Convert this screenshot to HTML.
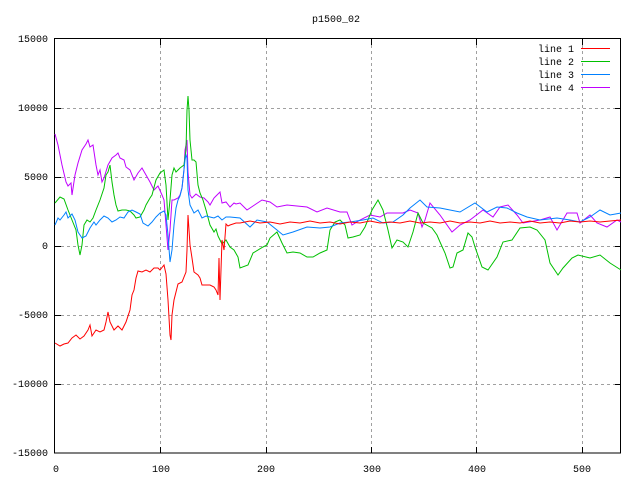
<!DOCTYPE html>
<html><head><meta charset="utf-8"><style>
html,body{margin:0;padding:0;background:#fff;width:640px;height:480px;overflow:hidden}
svg{display:block}
text{font-family:"Liberation Mono","DejaVu Sans Mono",monospace;font-size:10px;fill:#000}
</style></head><body>
<svg width="640" height="480" viewBox="0 0 640 480">
<g stroke="#a0a0a0" stroke-dasharray="3,3" stroke-width="1" fill="none" shape-rendering="crispEdges">
<path d="M55 108.5H621M55 177.5H621M55 246.5H621M55 315.5H621M55 384.5H621"/>
<path d="M160.5 39V453M266.5 39V453M371.5 39V453M476.5 39V453M582.5 39V453"/>
</g>
<g stroke="#000" stroke-width="1" fill="none" shape-rendering="crispEdges">
<rect x="54.5" y="38.5" width="566" height="414.5"/>
<path d="M55 108.5h6M55 177.5h6M55 246.5h6M55 315.5h6M55 384.5h6M621 108.5h-6M621 177.5h-6M621 246.5h-6M621 315.5h-6M621 384.5h-6"/>
<path d="M160.5 453v-6M266.5 453v-6M371.5 453v-6M476.5 453v-6M582.5 453v-6M160.5 39v6M266.5 39v6M371.5 39v6M476.5 39v6M582.5 39v6"/>
</g>
<g text-anchor="end">
<text x="48" y="42">15000</text><text x="48" y="111">10000</text><text x="48" y="180">5000</text><text x="48" y="249">0</text><text x="48" y="318">-5000</text><text x="48" y="387">-10000</text><text x="48" y="456">-15000</text>
</g>
<g text-anchor="middle">
<text x="56" y="472">0</text><text x="161" y="472">100</text><text x="266" y="472">200</text><text x="372" y="472">300</text><text x="477" y="472">400</text><text x="582" y="472">500</text>
<text x="336" y="22">p1500_02</text>
</g>
<g text-anchor="end">
<text x="574" y="52">line 1</text><text x="574" y="65">line 2</text><text x="574" y="78">line 3</text><text x="574" y="91">line 4</text>
</g>
<g stroke-width="1" fill="none">
<path stroke="#ff0000" d="M581 48.5h29"/>
<path stroke="#00c000" d="M581 61.5h29"/>
<path stroke="#0080ff" d="M581 74.5h29"/>
<path stroke="#c000ff" d="M581 87.5h29"/>
<polyline stroke="#c000ff" points="55,134 58,145 62,165 66,182 68,186 71,183 72,195 75,175 78,163 82,150 86,144 88,140 90,147 93,145 96,165 98,175 100,170 102,182 104,178 108,165 112,158 116,155 118,153 120,158 124,160 126,167 130,170 134,180 138,173 142,168 146,175 150,182 154,190 158,186 162,195 164,200 166,225 168,250 170,230 172,200 174,200 178,198 180,195 182,188 184,170 185,150 187,140 188,172 190,195 192,198 196,194 200,197 204,198 208,202 210,205 214,198 216,196 220,192 222,203 226,202 230,207 234,203 236,204 240,203 247,210 262,200 270,202 277,207 287,205 307,207 317,212 327,208 340,212 347,212 352,225 360,220 370,215 380,217 387,213 393,213 403,213 410,210 418,213 422,227 425,220 430,203 440,215 452,232 460,225 470,220 483,210 493,217 500,207 508,205 517,215 523,223 540,220 550,217 557,230 567,213 577,213 580,223 590,215 597,223 607,227 617,220 621,222"/>
<polyline stroke="#00c000" points="55,203 60,197 64,199 68,210 72,220 76,230 78,245 80,255 82,245 84,225 87,220 90,222 93,218 96,210 100,200 104,188 106,175 108,172 110,165 112,182 114,195 116,205 118,211 122,210 126,210 130,211 134,215 136,218 140,217 144,210 146,205 150,198 152,195 156,180 160,173 164,170 166,185 168,220 170,200 172,175 174,168 176,172 180,168 184,165 186,150 187,110 188,96 189,110 190,140 192,160 194,160 196,162 198,185 200,193 203,200 206,210 210,225 214,232 216,229 218,236 220,240 222,244 226,240 230,247 234,250 238,257 240,268 248,265 253,253 263,247 267,245 270,238 277,232 282,243 287,253 293,252 300,253 307,257 313,257 320,253 327,250 330,230 335,222 340,220 345,225 348,238 353,237 360,235 365,227 372,210 378,200 383,210 388,230 392,248 397,240 403,242 408,247 413,232 418,213 423,223 432,228 437,235 440,242 445,253 450,268 453,267 457,253 463,250 468,233 472,237 475,247 482,267 488,270 497,257 503,242 512,240 520,228 530,227 537,230 545,240 550,263 558,275 563,268 572,258 578,255 590,258 600,255 610,263 621,270"/>
<polyline stroke="#0080ff" points="55,225 58,218 60,220 64,215 66,212 68,218 72,214 75,220 78,232 82,238 86,236 90,228 94,222 96,225 100,220 104,216 108,218 112,222 116,220 120,217 124,218 128,212 132,210 136,212 140,214 143,223 148,226 152,222 156,217 160,213 164,211 166,215 168,235 170,262 172,250 174,225 176,208 178,200 180,196 182,188 185,160 186,155 187,158 188,190 190,205 194,213 198,210 202,218 206,216 210,217 214,218 218,216 222,220 226,217 230,217 240,218 250,227 257,220 267,222 277,230 283,235 293,232 307,227 320,228 330,227 340,223 350,222 363,220 373,218 383,223 393,222 403,215 410,208 420,200 427,207 440,208 450,210 460,212 475,203 487,212 497,207 507,208 517,213 527,217 540,220 557,218 570,220 580,222 590,217 600,210 610,215 621,213"/>
<polyline stroke="#ff0000" points="55,343 60,346 64,344 68,343 72,338 76,335 80,339 84,336 88,330 90,325 92,336 96,330 100,332 104,330 106,322 108,312 110,322 114,330 118,326 122,330 126,322 130,310 132,295 134,290 136,278 138,271 142,272 146,270 150,272 154,268 158,268 160,270 164,265 166,274 168,300 170,335 171,340 172,315 174,300 178,284 182,282 186,272 187,250 188,215 190,245 192,258 194,272 198,275 200,278 202,285 206,285 210,285 214,287 216,290 218,295 219,258 220,300 222,240 224,250 226,224 228,226 230,225 236,223 240,223 250,221 260,223 270,222 280,224 290,222 300,223 310,221 320,223 330,222 340,224 350,222 360,223 370,221 380,223 390,222 400,223 410,221 420,223 430,222 440,223 450,221 460,223 470,222 480,223 490,221 500,223 510,222 520,223 530,221 540,223 550,222 560,223 570,221 580,222 590,221 600,222 610,221 621,220"/>
</g>
</svg>
</body></html>
